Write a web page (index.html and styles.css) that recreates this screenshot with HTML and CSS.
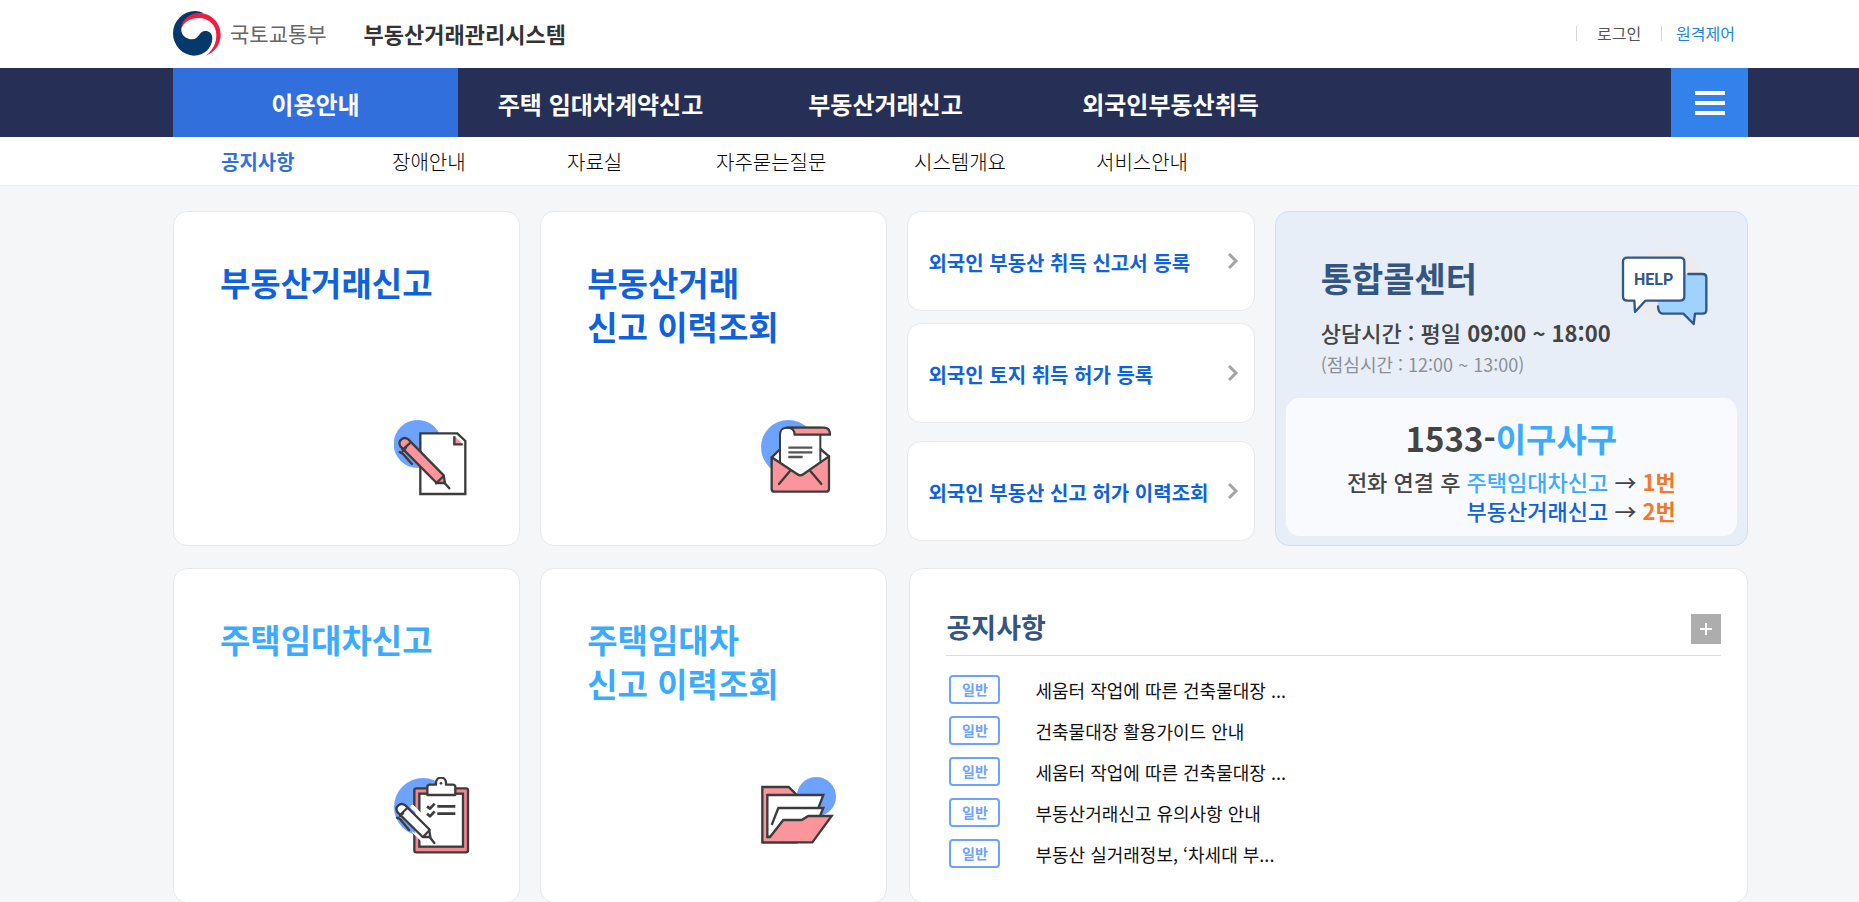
FILE: index.html
```html
<!DOCTYPE html>
<html lang="ko">
<head>
<meta charset="utf-8">
<meta name="viewport" content="width=device-width, initial-scale=1">
<title>부동산거래관리시스템</title>
<link rel="stylesheet" href="styles.css">
</head>
<body>
<header class="header wrap">
  <a class="brand" href="#">
    <svg class="brand-mark" viewBox="39 30 147 141" aria-hidden="true">
      <path fill="#05386b" d="M132 40C122 35 113 33 105 33A67 67 0 0 0 39 100A66 67 0 0 0 101 167C134 167 157 143 157 114C157 99 146 92 134 93C116 95 117 118 97 118C77 118 62 104 64 86C68 58 97 40 132 40Z"/>
      <path fill="#f01e3c" d="M64 86C64 56 93 38 120 39C156 41 182 70 182 103C182 133 165 157 138 167C159 149 169 130 169 105C169 75 146 54 116 54C92 54 71 66 64 86Z"/>
    </svg>
    <span class="brand-org">국토교통부</span>
    <strong class="brand-name">부동산거래관리시스템</strong>
  </a>
  <div class="util">
    <a href="#">로그인</a>
    <a class="util-blue" href="#">원격제어</a>
  </div>
</header>

<nav class="gnb" aria-label="주 메뉴">
  <div class="wrap gnb-row">
    <a class="gnb-item is-on" href="#">이용안내</a>
    <a class="gnb-item" href="#">주택 임대차계약신고</a>
    <a class="gnb-item" href="#">부동산거래신고</a>
    <a class="gnb-item" href="#">외국인부동산취득</a>
    <button class="gnb-menu" type="button" aria-label="전체 메뉴"><i></i><i></i><i></i></button>
  </div>
</nav>
<nav class="lnb" aria-label="하위 메뉴">
  <div class="wrap lnb-row">
    <a class="is-on" href="#">공지사항</a>
    <a href="#">장애안내</a>
    <a href="#">자료실</a>
    <a href="#">자주묻는질문</a>
    <a href="#">시스템개요</a>
    <a href="#">서비스안내</a>
  </div>
</nav>

<main class="wrap board">
  <a class="card tile" href="#">
    <h2>부동산거래신고</h2>
    <svg class="tile-icon" viewBox="702 659 231 234" aria-hidden="true">
      <circle cx="773" cy="731" r="72" fill="#6ea2ff"/>
      <g stroke="#3c3c3c" stroke-width="7">
        <path fill="#fff" d="M781 699H892L916 722V881H781Z"/>
        <path fill="#f9959b" stroke="none" d="M884 708L908 731H884Z"/>
        <path fill="none" d="M883 708V732H908"/>
        <path fill="#f9959b" d="M721 738C712 722 730 706 745 717L851 825L855 848L830 848Z" stroke-linejoin="round"/>
        <path fill="none" d="M728 748L749 729M828 849L851 827M853 847L868 864M728 752L738 742M719 755L728 760L756 791" stroke-linecap="round"/>
      </g>
    </svg>
  </a>

  <a class="card tile" href="#">
    <h2>부동산거래<br>신고 이력조회</h2>
    <svg class="tile-icon" viewBox="696 659 231 234" aria-hidden="true">
      <circle cx="778" cy="741" r="82" fill="#6ea2ff"/>
      <g stroke="#3c3c3c" stroke-width="7" stroke-linejoin="round" stroke-linecap="round">
        <path fill="#fff" d="M728 771L754 746H874L900 768L860 810H770Z"/>
        <path fill="#fff" stroke-width="6" d="M753 815V704C753 690 761 682 772 682H874V815Z"/>
        <path fill="#f9959b" d="M774 682H884C897 682 903 691 903 703H797C797 691 789 682 774 682Z"/>
        <path fill="#fff" stroke="none" d="M756 780H871V798L820 828H808L756 798Z"/>
        <path fill="#f9959b" d="M728 771L804 821Q814 829 824 821L900 768V865Q900 874 891 874H737Q728 874 728 865Z"/>
        <path fill="none" d="M783 812L750 851M844 812L877 851"/>
        <path fill="none" stroke="#555" stroke-linecap="butt" d="M778 742H850M778 756H850M778 770H821"/>
      </g>
    </svg>
  </a>

  <div class="links">
    <a class="card link" href="#"><span>외국인 부동산 취득 신고서 등록</span><svg class="chev" viewBox="0 0 10 16" aria-hidden="true"><path d="M1 1L8 8L1 15"/></svg></a>
    <a class="card link" href="#"><span>외국인 토지 취득 허가 등록</span><svg class="chev" viewBox="0 0 10 16" aria-hidden="true"><path d="M1 1L8 8L1 15"/></svg></a>
    <a class="card link" href="#"><span>외국인 부동산 신고 허가 이력조회</span><svg class="chev" viewBox="0 0 10 16" aria-hidden="true"><path d="M1 1L8 8L1 15"/></svg></a>
  </div>

  <section class="card call">
    <div class="call-head">
      <div>
        <h2>통합콜센터</h2>
        <p class="call-time">상담시간 : 평일 <b>09:00 ~ 18:00</b></p>
        <p class="call-lunch">(점심시간 : 12:00 ~ 13:00)</p>
      </div>
      <svg class="call-icon" viewBox="1085 140 264 237" role="img" aria-label="HELP">
        <circle cx="1222" cy="254" r="110" fill="#ececee"/>
        <g stroke="#30588b" stroke-width="7" stroke-linejoin="round" stroke-linecap="round">
          <path fill="#9fd2ff" stroke="none" d="M1195 221H1330Q1341 221 1341 232V329Q1341 340 1330 340H1307L1303 371L1272 340H1209Q1196 338 1196 322Z"/>
          <path fill="none" d="M1287 221H1330Q1341 221 1341 232V329Q1341 340 1330 340H1307L1303 371L1272 340H1209Q1197 338 1196 318"/>
          <path fill="#fff" d="M1104 172H1262Q1275 172 1275 185V288Q1275 301 1262 301H1158L1127 335L1125 301H1104Q1091 301 1091 288V185Q1091 172 1104 172Z"/>
        </g>
        <text x="1183" y="255" text-anchor="middle" class="help-text">HELP</text>
      </svg>
    </div>
    <div class="call-panel">
      <p class="call-number">1533-<span class="sky">이구사구</span></p>
      <p class="call-lines">전화 연결 후 <span class="sky">주택임대차신고</span> → <b>1번</b><br><span class="blue">부동산거래신고</span> → <b>2번</b></p>
    </div>
  </section>

  <a class="card tile tile-sky" href="#">
    <h2>주택임대차신고</h2>
    <svg class="tile-icon" viewBox="702 681 231 234" aria-hidden="true">
      <circle cx="789" cy="771" r="87" fill="#6ea2ff"/>
      <g stroke="#3c3c3c" stroke-width="7" stroke-linejoin="round" stroke-linecap="round">
        <rect x="763" y="715" width="161" height="192" rx="6" fill="#f0898f"/>
        <rect x="778" y="731" width="131" height="159" fill="#fff" stroke-linejoin="miter"/>
        <path fill="#fff" d="M802 735V711Q802 704 810 704H828V698A15 15 0 0 1 858 698V704H878Q886 704 886 711V735Z"/>
        <circle cx="843" cy="700" r="4" fill="#3c3c3c" stroke="none"/>
        <path fill="none" stroke-linecap="butt" stroke-width="8" d="M832 769H886M832 791H886M801 769L810 776L824 761M801 791L810 799L824 784"/>
        <path stroke="#fff" fill="#fff" stroke-width="12" d="M757 770L800 815L812 850L790 872L762 845Z"/>
        <path stroke="none" fill="#6ea2ff" d="M740 765L766 786V850L740 836Z"/>
        <path fill="#fff" d="M712 786C703 770 721 755 736 766L807 837L811 861L788 861Z"/>
        <path fill="none" d="M720 795L742 774M789 861L809 840M809 861L823 879M720 798L729 790M711 803L720 807L747 840"/>
      </g>
    </svg>
  </a>

  <a class="card tile tile-sky" href="#">
    <h2>주택임대차<br>신고 이력조회</h2>
    <svg class="tile-icon" viewBox="696 681 231 234" aria-hidden="true">
      <circle cx="862" cy="740" r="59" fill="#6ea2ff"/>
      <g stroke="#3c3c3c" stroke-width="7">
        <path fill="#f9959b" d="M700 711H779L803 735V877H700Z"/>
        <path fill="#fff" d="M715 735H883L867 777L850 830L725 861H715Z"/>
        <path fill="#fff" d="M728 825L748 774H883L872 800L858 830L740 850"/>
        <path fill="#f9959b" d="M702 877L722 861L763 810H818L838 798H908L850 877Z" stroke="none"/>
        <path fill="none" d="M715 861H723L763 810H818L838 798H908L850 877H700"/>
      </g>
    </svg>
  </a>

  <section class="card notice">
    <div class="notice-head">
      <h2>공지사항</h2>
      <button class="more" type="button" aria-label="공지사항 더보기"></button>
    </div>
    <ul>
      <li><span class="badge">일반</span><a href="#">세움터 작업에 따른 건축물대장 ...</a></li>
      <li><span class="badge">일반</span><a href="#">건축물대장 활용가이드 안내</a></li>
      <li><span class="badge">일반</span><a href="#">세움터 작업에 따른 건축물대장 ...</a></li>
      <li><span class="badge">일반</span><a href="#">부동산거래신고 유의사항 안내</a></li>
      <li><span class="badge">일반</span><a href="#">부동산 실거래정보, ‘차세대 부...</a></li>
    </ul>
  </section>
</main>
</body>
</html>
```

FILE: styles.css
```css
* { box-sizing: border-box; }

body {
  margin: 0;
  background: #f5f6f8;
  color: #111;
  font-family: "Noto Sans CJK KR", "Noto Sans", sans-serif;
}

h2, p, ul { margin: 0; padding: 0; }
ul { list-style: none; }
a { color: inherit; text-decoration: none; }
button { border: 0; padding: 0; cursor: pointer; }

.wrap { padding-left: 173px; padding-right: 111px; }

/* Header */
.header {
  display: flex;
  justify-content: space-between;
  align-items: center;
  height: 68px;
  padding-bottom: 2px;
  background: #fff;
}
.brand { display: flex; align-items: center; }
.brand-mark { width: 49px; height: 47px; }
.brand-org { margin-left: 8px; font-size: 21px; color: #666; }
.brand-name { margin-left: 37px; font-size: 22px; color: #333; }
.util { display: flex; align-items: center; padding-right: 13px; font-size: 16px; line-height: 16px; color: #555; }
.util a { display: flex; align-items: center; }
.util a::before { content: ""; width: 1px; height: 15px; margin-right: 20px; background: #d8d8d8; }
.util .util-blue { margin-left: 20px; color: #1c86d8; }
.util .util-blue::before { margin-right: 14px; }

/* Main menu */
.gnb { background: #262f56; }
.gnb-row { display: flex; height: 69px; }
.gnb-item {
  flex: 0 1 285px;
  display: flex;
  align-items: center;
  justify-content: center;
  padding-top: 2px;
  color: #fff;
  font-size: 24px;
  font-weight: 700;
  white-space: nowrap;
}
.gnb-item.is-on { background: #3170dc; }
.gnb-menu {
  display: flex;
  flex-direction: column;
  align-items: center;
  justify-content: center;
  gap: 6px;
  width: 77px;
  margin-left: auto;
  background: #3381ea;
}
.gnb-menu i { width: 30px; height: 4px; background: #fff; }

/* Sub menu */
.lnb { background: #fff; border-bottom: 1px solid #ebebeb; }
.lnb-row {
  display: grid;
  grid-template-columns: 171px 175px 149px 198px 182px auto;
  align-items: center;
  height: 48px;
  font-size: 20px;
  font-weight: 300;
  color: #000;
}
.lnb-row a { padding-left: 48px; white-space: nowrap; }
.lnb-row .is-on { color: #3170dc; font-weight: 700; }

/* Board */
.board {
  display: grid;
  grid-template-columns: minmax(0, 347fr) minmax(0, 347fr) minmax(0, 347fr) minmax(0, 473fr);
  grid-auto-rows: minmax(335px, auto);
  gap: 22px 20px;
  padding-top: 25px;
}
.card { background: #fff; border: 1px solid #e6e8ea; border-radius: 14px; }

.tile {
  display: flex;
  flex-direction: column;
  justify-content: space-between;
  padding: 48px 48px 47px 46px;
  color: #0f62dc;
}
.tile h2 { font-size: 33px; line-height: 44px; font-weight: 700; white-space: nowrap; }
.tile-sky { color: #3caaff; }
.tile-icon { align-self: flex-end; width: 77px; height: 78px; }

.links { display: flex; flex-direction: column; }
.link {
  display: flex;
  align-items: center;
  justify-content: space-between;
  height: 100px;
  padding: 0 16px 0 20px;
  color: #0f62dc;
  font-size: 20px;
  font-weight: 700;
  white-space: nowrap;
}
.link + .link { margin-top: 12px; }
.link + .link + .link { margin-top: 18px; }
.link span { padding-top: 2px; }
.chev { flex: none; width: 10px; height: 16px; fill: none; stroke: #a3a3a3; stroke-width: 3; }

/* Call center */
.call {
  display: flex;
  flex-direction: column;
  justify-content: space-between;
  padding: 0 10px 9px;
  background: #e7eef7;
  border-color: #cfdeee;
}
.call-head { display: flex; justify-content: space-between; padding: 35px 28px 0 35px; white-space: nowrap; }
.call-head h2 { padding-top: 9px; font-size: 34px; line-height: 44px; font-weight: 700; color: #34557f; }
.call-time { margin-top: 14px; font-size: 22px; line-height: 36px; font-weight: 500; color: #444; }
.call-lunch { font-size: 18px; line-height: 28px; color: #8b9096; }
.call-icon { flex: none; width: 88px; height: 79px; }
.help-text { font: 700 48px Roboto, sans-serif; fill: #30588b; }
.call-panel {
  display: flex;
  flex-direction: column;
  align-items: center;
  gap: 4px;
  padding: 15px 0 11px;
  border-radius: 14px;
  background: #f9fafd;
  color: #444;
  font-weight: 500;
  white-space: nowrap;
}
.call-number { font-size: 33px; line-height: 50px; font-weight: 700; }
.call-lines { font-size: 22px; line-height: 29px; text-align: right; }
.call-lines b { color: #ee7a2c; font-weight: 700; }
.sky { color: #3caaff; }
.blue { color: #0f62dc; }

/* Notice */
.notice { grid-column: 3 / 5; margin-left: 2px; padding: 36px 26px 20px 36px; }
.notice-head {
  display: flex;
  justify-content: space-between;
  align-items: center;
  min-height: 51px;
  padding-bottom: 2px;
  border-bottom: 1px solid #ddd;
}
.notice-head h2 { align-self: flex-start; font-size: 27px; line-height: 43px; font-weight: 700; color: #34557f; }
.more {
  width: 30px;
  height: 30px;
  background:
    linear-gradient(#fff, #fff) center / 12px 2px no-repeat,
    linear-gradient(#fff, #fff) center / 2px 12px no-repeat,
    #adadad;
}
.notice ul { padding: 13px 3px 0; }
.notice li { display: flex; align-items: center; height: 41px; font-size: 18px; }
.badge {
  width: 51px;
  height: 29px;
  margin-right: 35px;
  border: 2px solid #6ea2ff;
  border-radius: 4px;
  color: #6ea2ff;
  font-size: 14px;
  line-height: 25px;
  font-weight: 700;
  text-align: center;
}
```
